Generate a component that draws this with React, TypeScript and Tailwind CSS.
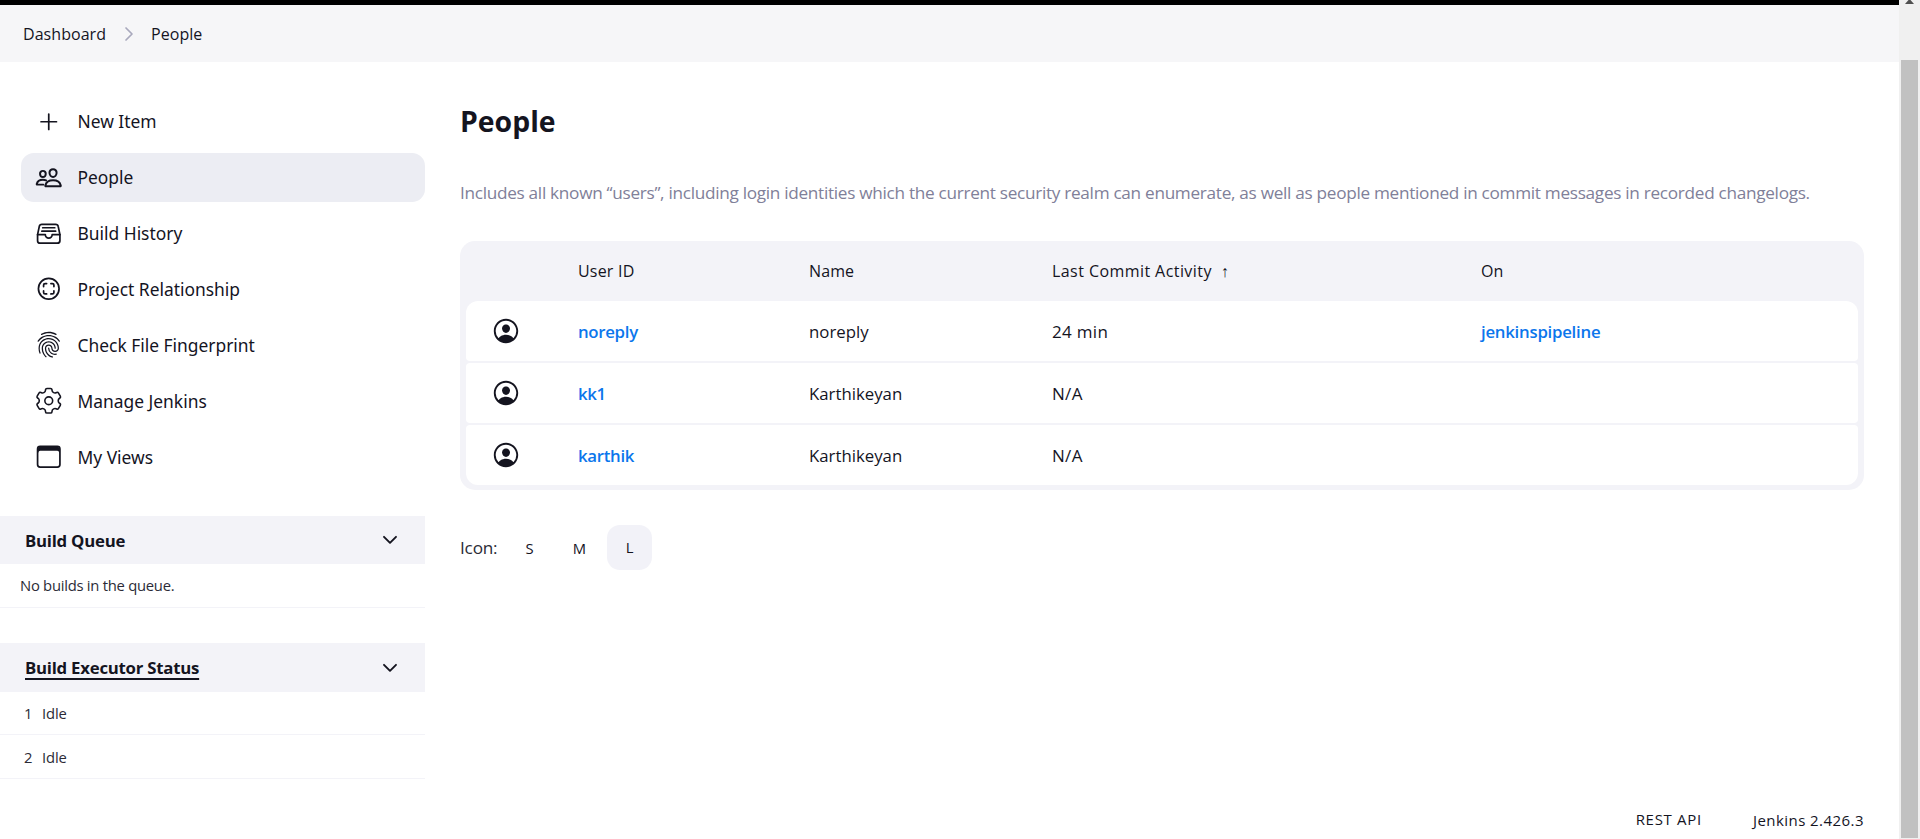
import type { ReactNode } from "react";
import type { IconType } from "react-icons";
import {
  IoAddOutline,
  IoBrowsersOutline,
  IoFileTrayFullOutline,
  IoFingerPrintOutline,
  IoPeopleOutline,
  IoPersonCircleOutline,
  IoScanCircleOutline,
} from "react-icons/io5";

type Point = [number, number];

// Six-lobed outline with rounded corners, centred on (13, 13).
function gearOutline() {
  const points: Point[] = [];
  for (let lobe = 0; lobe < 6; lobe++) {
    for (const [offset, radius] of [[-21, 9.1], [-14, 12], [14, 12], [21, 9.1]]) {
      const angle = ((lobe * 60 - 90 + offset) * Math.PI) / 180;
      points.push([13 + radius * Math.cos(angle), 13 + radius * Math.sin(angle)]);
    }
  }
  const toward = (from: Point, to: Point, distance: number): Point => {
    const length = Math.hypot(to[0] - from[0], to[1] - from[1]);
    const t = Math.min(distance / length, 0.5);
    return [from[0] + (to[0] - from[0]) * t, from[1] + (to[1] - from[1]) * t];
  };
  return (
    points
      .map((p, i) => {
        const a = toward(p, points[(i + points.length - 1) % points.length], 1.2);
        const b = toward(p, points[(i + 1) % points.length], 1.2);
        return `${i === 0 ? "M" : "L"}${a[0].toFixed(2)} ${a[1].toFixed(2)}Q${p[0].toFixed(2)} ${p[1].toFixed(2)} ${b[0].toFixed(2)} ${b[1].toFixed(2)}`;
      })
      .join("") + "Z"
  );
}

function GearIcon({ className }: { className?: string }) {
  return (
    <svg viewBox="0 0 26 26" fill="none" stroke="currentColor" strokeWidth="1.5" strokeLinejoin="round" className={className}>
      <circle cx="13" cy="13" r="3.7" />
      <path d={gearOutline()} />
    </svg>
  );
}

function Chevron() {
  return (
    <svg viewBox="0 0 16 10" fill="none" stroke="currentColor" strokeWidth="1.9" strokeLinecap="round" strokeLinejoin="round" className="h-[10px] w-4">
      <path d="M2 1.8l6 6 6-6" />
    </svg>
  );
}

const tasks: { label: string; icon: IconType | typeof GearIcon; active?: boolean }[] = [
  { label: "New Item", icon: IoAddOutline },
  { label: "People", icon: IoPeopleOutline, active: true },
  { label: "Build History", icon: IoFileTrayFullOutline },
  { label: "Project Relationship", icon: IoScanCircleOutline },
  { label: "Check File Fingerprint", icon: IoFingerPrintOutline },
  { label: "Manage Jenkins", icon: GearIcon },
  { label: "My Views", icon: IoBrowsersOutline },
];

const people = [
  { id: "noreply", name: "noreply", activity: "24 min", on: "jenkinspipeline" },
  { id: "kk1", name: "Karthikeyan", activity: "N/A", on: "" },
  { id: "karthik", name: "Karthikeyan", activity: "N/A", on: "" },
];

const columns = "grid grid-cols-[112px_231px_243px_429px_1fr] items-center";

function PaneHeader({ children }: { children: ReactNode }) {
  return (
    <div className="flex h-[48.5px] items-center justify-between bg-[#f3f3f8] pr-[27px] pl-[25px] text-[16.8px] font-bold tracking-[-0.24px]">
      {children}
      <Chevron />
    </div>
  );
}

export default function App() {
  return (
    <div className="flex h-[839px] overflow-hidden bg-white font-['Open_Sans',sans-serif] text-[#14141f]">
      <div className="flex min-w-0 flex-1 flex-col">
        <div className="h-[5px] shrink-0 bg-black" />
        <nav className="flex h-[57px] shrink-0 items-center bg-[#f6f6f8] pt-px pl-[23px] text-[16px] font-medium tracking-[0.05px]">
          <span>Dashboard</span>
          <svg viewBox="0 0 10 16" fill="none" stroke="#a9a9bd" strokeWidth="1.7" strokeLinecap="round" strokeLinejoin="round" className="mr-[17px] mb-px ml-[18px] h-4 w-[10px]">
            <path d="M2 2l6 6-6 6" />
          </svg>
          <span>People</span>
        </nav>

        <div className="flex min-h-0 flex-1">
          <aside className="w-[425px] shrink-0">
            <ul className="flex flex-col gap-[6.9px] pt-[35px] pl-[21px] font-['Noto_Sans',sans-serif]">
              {tasks.map(({ label, icon: Icon, active }) => (
                <li key={label} className={active ? "flex h-[49px] items-center rounded-[13px] bg-[#ecedf3] pl-[14px]" : "flex h-[49px] items-center pl-[14px]"}>
                  <Icon className={active ? "size-[27.5px] [&_*]:stroke-[37px]" : "size-[27.5px]"} />
                  <span className="ml-[15px] text-[17.4px]">{label}</span>
                </li>
              ))}
            </ul>

            <section className="mt-[34.6px]">
              <PaneHeader>
                <span className="pt-px">Build Queue</span>
              </PaneHeader>
              <div className="h-[43.5px] border-b border-[#f3f3f8] pt-[10px] pl-5 text-[14.8px] leading-[22px] tracking-[-0.26px] text-[#2b2b36]">No builds in the queue.</div>
            </section>

            <section className="mt-[35.4px]">
              <PaneHeader>
                <span className="underline decoration-[1.5px] underline-offset-4">Build Executor Status</span>
              </PaneHeader>
              {["1", "2"].map((n) => (
                <div key={n} className="flex h-[43.6px] items-center gap-[9.5px] border-b border-[#f3f3f8] pl-6 text-[14.8px] text-[#2b2b36]">
                  <span>{n}</span>
                  <span className="tracking-[-0.1px]">Idle</span>
                </div>
              ))}
            </section>
          </aside>

          <main className="flex min-w-0 flex-1 flex-col pr-[35px] pl-[35px]">
            <h1 className="mt-[39px] text-[28.4px] leading-10 font-bold">People</h1>
            <p className="mt-[39px] text-[17.2px] leading-[26px] tracking-[-0.296px] whitespace-nowrap text-[#808099]">
              Includes all known “users”, including login identities which the current security realm can enumerate, as well as people mentioned in commit messages in recorded changelogs.
            </p>

            <div className="mt-[35px] rounded-[15px] bg-[#f3f3f8] px-[6px] pb-[5px]">
              <div className={`${columns} h-[60px] text-[16px] font-medium`}>
                <span />
                <span className="tracking-[0.2px]">User ID</span>
                <span className="tracking-[0.1px]">Name</span>
                <span className="tracking-[0.43px]">
                  Last Commit Activity<span className="ml-[9px] font-light">↑</span>
                </span>
                <span>On</span>
              </div>
              <div className="flex flex-col gap-[2px]">
                {people.map((p) => (
                  <div key={p.id} className={`${columns} h-[60px] rounded-[4px] bg-white text-[16.8px] font-medium first:rounded-t-[12px] last:rounded-b-[12px]`}>
                    <IoPersonCircleOutline className="mb-px ml-[25px] size-[30px]" />
                    <a className="pt-px font-semibold tracking-[-0.3px] text-[#0b76ec]">{p.id}</a>
                    <span className="pt-px">{p.name}</span>
                    <span className="pt-px text-[17px] tracking-[0.3px]">{p.activity}</span>
                    <a className="pt-px font-semibold tracking-[-0.25px] text-[#0b76ec]">{p.on}</a>
                  </div>
                ))}
              </div>
            </div>

            <div className="mt-[35px] flex h-[45px] items-center text-[14.8px] font-medium">
              <span className="w-[47px] pt-px text-[17.2px] font-normal tracking-[-0.2px] text-[#2b2b36]">Icon:</span>
              <span className="flex w-[45px] justify-center pt-px">S</span>
              <span className="ml-[5px] flex w-[45px] justify-center pt-px">M</span>
              <span className="ml-[5px] flex h-[45px] w-[45px] items-center justify-center rounded-[13px] bg-[#f2f2f8]">L</span>
            </div>

            <footer className="mt-auto mb-[7px] flex items-center justify-end gap-[51px] text-[15px] font-medium">
              <span className="pb-[2px] tracking-[0.7px]">REST API</span>
              <span className="tracking-[0.45px]">Jenkins 2.426.3</span>
            </footer>
          </main>
        </div>
      </div>

      <div className="flex w-[21px] shrink-0 flex-col items-center bg-[#f0f0f0]">
        <svg viewBox="0 0 9 4" className="h-1 w-[9px] shrink-0 fill-[#505050]">
          <path d="M3.5 0h2L9 4H0z" />
        </svg>
        <div className="mt-14 mb-px w-[17px] flex-1 bg-[#c1c1c1]" />
      </div>
    </div>
  );
}
